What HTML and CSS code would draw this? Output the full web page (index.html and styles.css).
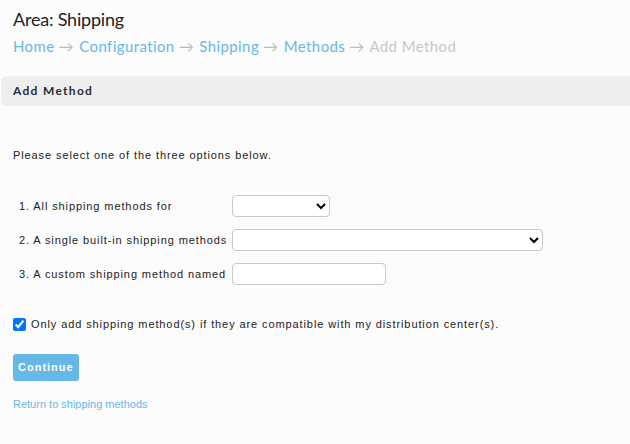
FILE: index.html
```html
<!DOCTYPE html>
<html lang="en">
  <head>
    <meta charset="UTF-8" />
    <title>Area: Shipping</title>
    <link rel="stylesheet" href="styles.css">
  </head>
  <body>
    <div class="head">
      <div class="area">Area: Shipping</div>
      <div class="crumbs">
        <a href="#">Home</a><span class="arr">&rarr;</span>
        <a href="#">Configuration</a><span class="arr">&rarr;</span>
        <a href="#">Shipping</a><span class="arr">&rarr;</span>
        <a href="#">Methods</a><span class="arr">&rarr;</span>
        <span class="current">Add Method</span>
      </div>
    </div>
    <div class="bar">Add Method</div>
    <div class="content">
      <p class="intro">Please select one of the three options below.</p>
      <div class="rows">
        <label>1. All shipping methods for</label>
        <div><select class="sel-small"><option></option></select></div>
        <label>2. A single built-in shipping methods</label>
        <div><select class="sel-wide"><option></option></select></div>
        <label>3. A custom shipping method named</label>
        <div><input type="text" class="txt"></div>
      </div>
      <label class="check"><input type="checkbox" checked> Only add shipping method(s) if they are compatible with my distribution center(s).</label>
      <div class="continue">Continue</div>
      <a href="#" class="back">Return to shipping methods</a>
    </div>
  </body>
</html>
```

FILE: styles.css
```css
body {
  margin: 0;
  background-color: #fcfcfc;
  font-family: "Liberation Sans", Arial, sans-serif;
  color: #222;
}
.head {
  padding: 8px 13px 0;
  font-family: Lato, sans-serif;
}
.area {
  font-size: 18px;
  line-height: 22px;
  letter-spacing: -0.2px;
  color: #222;
}
.crumbs {
  margin-top: 6px;
  font-size: 15px;
  line-height: 20px;
  letter-spacing: 0.4px;
}
.crumbs a {
  color: #6cb6e6;
  text-decoration: none;
}
.arr {
  color: #bbb;
  margin: 0 1px 0 4px;
}
.current {
  color: #c8c8c8;
}
.bar {
  margin: 20px 0 0 1px;
  height: 30px;
  line-height: 30px;
  padding-left: 12px;
  background-color: #eeeeee;
  border-radius: 6px 0 0 6px;
  font-family: Lato, sans-serif;
  font-weight: bold;
  font-size: 12px;
  letter-spacing: 1.3px;
  color: #2b2b3a;
}
.content {
  padding: 0 13px;
  font-size: 11px;
  letter-spacing: 0.9px;
}
.intro {
  margin: 42px 0 0;
  line-height: 14px;
}
.rows {
  margin-top: 33px;
  display: grid;
  grid-template-columns: 213px auto;
  row-gap: 12px;
  padding-left: 6px;
}
.rows label {
  display: flex;
  align-items: center;
  height: 22px;
}
select,
.txt {
  box-sizing: border-box;
  height: 22px;
  border: 1px solid #c8c8c8;
  border-radius: 4px;
  background-color: #fff;
  margin: 0;
  font-size: 11px;
}
.sel-small {
  width: 98px;
}
.sel-wide {
  width: 311px;
}
.txt {
  width: 154px;
}
.check {
  display: flex;
  align-items: center;
  margin-top: 31px;
  line-height: 16px;
}
.check input {
  margin: 0 5px 0 0;
  width: 13px;
  height: 13px;
}
.continue {
  display: inline-block;
  margin-top: 22px;
  padding: 0 5px;
  height: 27px;
  line-height: 27px;
  background-color: #65b8e8;
  color: #fff;
  font-weight: bold;
  font-size: 11px;
  letter-spacing: 1px;
  border-radius: 3px;
  cursor: pointer;
}
.back {
  display: block;
  margin-top: 17px;
  color: #6cb6e6;
  text-decoration: none;
  letter-spacing: 0;
}
```
